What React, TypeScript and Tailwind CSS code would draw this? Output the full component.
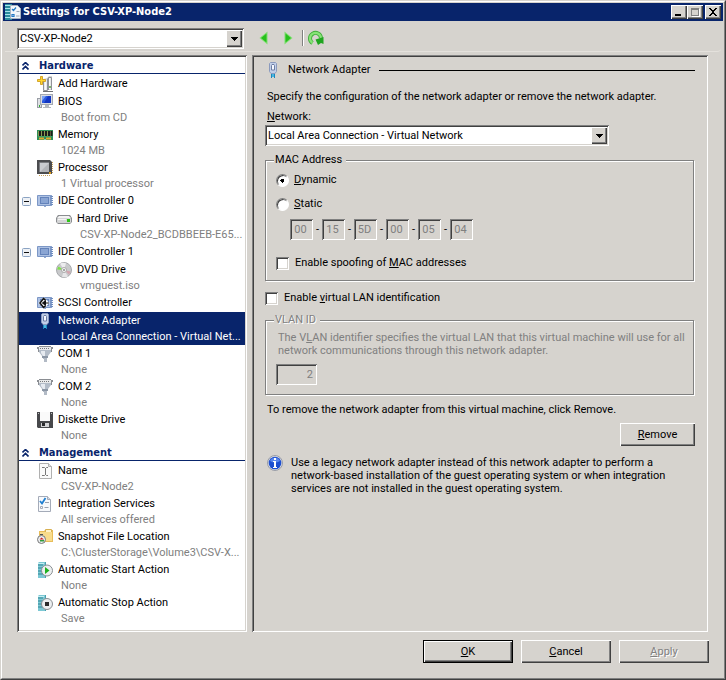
import type { ReactNode } from "react";

const sunken =
  "shadow-[inset_1px_1px_0_#808080,inset_-1px_-1px_0_#fff,inset_2px_2px_0_#404040,inset_-2px_-2px_0_#d6d3ce]";
const raised =
  "shadow-[inset_1px_1px_0_#fff,inset_-1px_-1px_0_#404040,inset_-2px_-2px_0_#808080]";

function Svg({ children, w = 16, h = 16 }: { children: ReactNode; w?: number; h?: number }) {
  return (
    <svg width={w} height={h} viewBox={`0 0 ${w} ${h}`} className="block shrink-0" aria-hidden="true">
      {children}
    </svg>
  );
}

function AppIcon() {
  return (
    <Svg>
      <rect x="0" y="0" width="7" height="16" fill="#2a8c9d" />
      <path d="M0 1.500h6M0 4.500h6M0 7.500h6M0 10.500h6M0 13.500h6" stroke="#a8e4ec" />
      <path d="M5.500 1.500h7l3 3v10h-10z" fill="#f3f6fb" stroke="#a9b3c1" />
      <path d="M7 5l1.500 1.500L11 3.500M7 10.500h2v2H7z" fill="none" stroke="#2377c4" strokeWidth="1.200" />
      <path d="M11.500 7.500h3M11 12h3.500" stroke="#98a4b4" />
    </Svg>
  );
}

function AddHardwareIcon() {
  return (
    <Svg>
      <path d="M6 3l4-1 2-2h3v14H6z" fill="#d6d8db" />
      <path d="M8.500 4v10M12.500 2v11" stroke="#fafafa" strokeWidth="2" />
      <path d="M6.500 6v8.500h4V2.500M11.500 14V1.500h3V14" fill="none" stroke="#909399" />
      <rect x="12" y="10" width="2" height="2" fill="#7db66d" />
      <path d="M6 15.500h10" stroke="#6e7074" />
      <path d="M3.500 .5h2v3h3v2h-3v3h-2v-3h-3v-2h3z" fill="#ffd52e" stroke="#c8930f" strokeWidth=".8" />
    </Svg>
  );
}

function BiosIcon() {
  return (
    <Svg>
      <rect x=".5" y="4.500" width="4" height="9" fill="#dfe1e5" stroke="#9a9ea6" />
      <rect x="2" y="11" width="1" height="2" fill="#2ea82e" />
      <rect x="3.500" y=".5" width="12" height="10" fill="#d9dce2" stroke="#a3a8b1" />
      <rect x="5" y="2" width="9" height="7" fill="#1236c4" />
      <path d="M5 2h6l-4 7H5z" fill="#2c5be0" />
      <path d="M5 2h4L5 7z" fill="#7aa2f6" />
      <path d="M8 11h4v2h2v1H6v-1h2z" fill="#b4b8be" />
    </Svg>
  );
}

function MemoryIcon() {
  return (
    <Svg>
      <path d="M0 3h16v10H9l-1-1-1 1H0z" fill="#2f8f57" />
      <rect x="1" y="4" width="14" height="5" fill="#8a9a50" />
      <path d="M3 4v5M6 4v5M9 4v5M12 4v5M14.500 4v5" stroke="#1c1c1c" strokeWidth="2" />
      <path d="M1 9.500h14" stroke="#3fa068" />
      <path d="M2 11.500h5M9 11.500h5" stroke="#e2a730" strokeWidth="2" />
    </Svg>
  );
}

function ProcessorIcon() {
  return (
    <Svg>
      <path d="M2 15.500h12M15.500 2v12" stroke="#c9a15a" strokeDasharray="1 1" />
      <path d="M0 0h13l2 2v12H0z" fill="#4b4c4f" />
      <path d="M3 3h9v9H3z" fill="#b2b4b8" />
      <path d="M3 3h9l-9 9z" fill="#c9cbcf" />
      <path d="M2.500 12V2.500H12" fill="none" stroke="#7a7c80" />
      <rect x="12" y="12" width="2" height="2" fill="#e0a020" />
    </Svg>
  );
}

function IdeChip() {
  return (
    <>
      <path d="M1 2h14v11H9v1H7v-1H1z" fill="#8ea8d2" />
      <path d="M.5 2.500h13v10H.5z" fill="#adc1e3" stroke="#7c97c6" />
      <path d="M15 3v10" stroke="#6f8cbe" strokeWidth="2" strokeDasharray="1 1" />
      <rect x="3.500" y="4.500" width="8" height="6" fill="#8aa5d3" stroke="#6483ba" />
    </>
  );
}

function IdeIcon() {
  return (
    <Svg>
      <IdeChip />
    </Svg>
  );
}

function ScsiIcon() {
  return (
    <Svg>
      <IdeChip />
      <path d="M7 2.500L12.500 8 7 13.500 1.500 8z" fill="#fff" />
      <path d="M8.500 5L6.500 3.500 3 8l3.500 4.500L8.500 11" fill="none" stroke="#111" strokeWidth="1.600" />
      <path d="M5.500 8H12M8.500 5.500v5L5.500 8z" fill="#111" stroke="#111" />
    </Svg>
  );
}

function HardDriveIcon() {
  return (
    <Svg>
      <path d="M2 4h12l2 3v4l-2 2H2l-2-2V7z" fill="#8b8d90" />
      <path d="M3 5h10l2 2H1z" fill="#f3f3f3" />
      <rect x="1" y="7" width="14" height="5" rx="1" fill="#d4d5d6" />
      <path d="M2 8.500h8" stroke="#f4f4f4" />
      <rect x="11" y="8" width="3" height="3" fill="#2fc417" />
    </Svg>
  );
}

function DvdIcon() {
  return (
    <Svg>
      <circle cx="8" cy="8" r="7.500" fill="#c8c9cb" stroke="#a7a9ac" />
      <path d="M8 8L4 1.500a7 7 0 0 1 6-.3z" fill="#ececee" />
      <path d="M8 8l4 6.500a7 7 0 0 1-6 .3z" fill="#e6e6e8" />
      <path d="M8 8L1.200 7.500a7 7 0 0 1 1.300-3z" fill="#7fe04a" />
      <path d="M8 8l5 4.500a6 6 0 0 0 1.500-3z" fill="#d3a4ae" />
      <circle cx="8" cy="8" r="2.500" fill="#f6f6f6" stroke="#aaa" />
      <circle cx="8" cy="8" r="1" fill="#8a8a8a" />
    </Svg>
  );
}

function NetworkIcon() {
  return (
    <Svg>
      <path d="M5.500 .5h5l1 1v8l-1.500 2H6l-1.500-2v-8z" fill="#c2cfe8" stroke="#8b9abd" />
      <path d="M7 2.500h2l.5 1v4.500h-3V3.500z" fill="#f6f9ff" stroke="#6d7da3" />
      <path d="M6 12h4v3H6z" fill="#49b6e0" />
      <path d="M6.500 12v4M9.500 12v4" stroke="#1b87bd" />
    </Svg>
  );
}

function ComIcon() {
  return (
    <Svg>
      <path d="M0 1h2V0h12v1h2v2h-1v3H1V3H0z" fill="#8a8d92" />
      <path d="M2 1h12v3H2z" fill="#e8e9ea" />
      <path d="M3 2.500h10" stroke="#75777b" strokeDasharray="1 1" />
      <path d="M2 4h12v2l-3 4H5L2 6z" fill="#b3bcc8" />
      <path d="M4 5h4v5H6L4 7z" fill="#e6eaf0" />
      <path d="M5 10h6v2H5z" fill="#8c97a6" />
      <path d="M6 12h4v1H6zM7 13h3v3H7z" fill="#b2bac5" />
    </Svg>
  );
}

function DisketteIcon() {
  return (
    <Svg>
      <path d="M0 0h16v16H1l-1-1z" fill="#47484b" />
      <path d="M3 0h10v9H3z" fill="#fafafa" />
      <path d="M1 1h1v1H1zM14 1h1v1h-1z" fill="#bbb" />
      <path d="M4 11h8v4H4z" fill="#d2d3d5" />
      <path d="M5 11h3v3H5z" fill="#2a2a2c" />
    </Svg>
  );
}

function NameIcon() {
  return (
    <Svg>
      <path d="M2.500 .5h9l3 3v12h-12z" fill="#fafafa" stroke="#b0b0b0" />
      <path d="M11.500 .5v3h3" fill="#ddd" stroke="#b0b0b0" />
      <path d="M5 4.500h2.500l1 1 1-1H11M8.500 5v7M5 12.500h2.500l1-1 1 1H11" fill="none" stroke="#777" />
    </Svg>
  );
}

function ServicesIcon() {
  return (
    <Svg>
      <path d="M1.500 .5h9l3 3v12h-12z" fill="#f7f9fc" stroke="#a4abb8" />
      <path d="M10.500 .5v3h3" fill="#d6dbe4" stroke="#a4abb8" />
      <path d="M3 5l2 2.500L8.500 2" fill="none" stroke="#1f7fd1" strokeWidth="1.800" />
      <path d="M3.500 10.500h2v2h-2z" fill="none" stroke="#a4abb8" />
      <path d="M8 6.500h4M7.500 11.500h4" stroke="#98a0ae" />
    </Svg>
  );
}

function SnapshotIcon() {
  return (
    <Svg>
      <path d="M2 2h5l1-1h8v12H4L2 11z" fill="#e8bd5a" />
      <path d="M8.500 .5h6v3h-6z" fill="#fff3c9" stroke="#d8b052" />
      <path d="M3 3h12v9H3z" fill="#f8dc8c" />
      <circle cx="4.500" cy="10.500" r="4" fill="#e9eef0" stroke="#777" />
      <path d="M3 5.500h3" stroke="#555" />
      <path d="M2.500 10.500l2-2 2.500 2z" fill="#d62020" />
      <path d="M3 11h4v1.500H3z" fill="#2f9e3c" />
    </Svg>
  );
}

function ServerBars() {
  return (
    <>
      <path d="M1 1l1-1h7v16H1z" fill="#7cc8d4" />
      <path d="M8 0h1v16H8z" fill="#4a9fae" />
      <path d="M1 3h5M1 6h5M1 9h5M1 12h5" stroke="#2f8494" />
      <path d="M1 1.500h6" stroke="#c6eef2" />
    </>
  );
}

function StartIcon() {
  return (
    <Svg>
      <ServerBars />
      <circle cx="10" cy="8.500" r="5.500" fill="#eceff0" stroke="#8a8f93" />
      <path d="M8 5l4.500 3.500L8 12z" fill="#1fb01f" />
    </Svg>
  );
}

function StopIcon() {
  return (
    <Svg>
      <ServerBars />
      <circle cx="10" cy="9" r="5.500" fill="#eceff0" stroke="#8a8f93" />
      <path d="M8 7h4v4H8z" fill="#2b2b2b" />
    </Svg>
  );
}

function InfoIcon() {
  return (
    <Svg>
      <circle cx="8" cy="8" r="7.500" fill="#d9dce4" stroke="#9a9da6" />
      <circle cx="8" cy="8" r="6.300" fill="#1d4fd0" />
      <path d="M3 6a5.500 5.500 0 0 1 10 0q-5 3-10 0z" fill="#5a87ec" />
      <path d="M7 3h2v2H7zM6 6h3v6h1v1H6v-1h1V7H6z" fill="#fff" />
    </Svg>
  );
}

function Expander() {
  return (
    <button type="button" aria-label="Collapse" className="block size-[9px]">
      <svg width="9" height="9" viewBox="0 0 9 9" className="block">
        <rect x=".5" y=".5" width="8" height="8" rx="1" fill="#eef1f5" stroke="#8ba3c3" />
        <path d="M2 4.500h5" stroke="#111" />
      </svg>
    </button>
  );
}

function DropArrow() {
  return (
    <span
      className={`pointer-events-none absolute inset-y-0.5 right-0.5 flex w-4 items-center justify-center bg-[#d6d3ce] ${raised}`}
    >
      <svg width="7" height="4" viewBox="0 0 7 4" className="block" shapeRendering="crispEdges">
        <path d="M0 0h7v1H6v1H5v1H4v1H3V3H2V2H1V1H0z" fill="#000" />
      </svg>
    </span>
  );
}

function Section({ title, children }: { title: string; children: ReactNode }) {
  return (
    <section>
      <h2 className="mb-px flex h-[17px] items-center gap-[10px] border-b border-[#08246b] pt-0.5 pl-[3px] font-['DejaVu_Sans_Condensed','DejaVu_Sans',sans-serif] font-bold text-[#08246b]">
        <svg width="7" height="8" viewBox="0 0 7 8" className="block" aria-hidden="true">
          <path d="M.5 3.500l3-3 3 3M.5 7.500l3-3 3 3" fill="none" stroke="#08246b" strokeWidth="1.600" />
        </svg>
        {title}
      </h2>
      <ul>{children}</ul>
    </section>
  );
}

type ItemProps = {
  icon: ReactNode;
  title: string;
  detail?: string;
  nested?: boolean;
  expandable?: boolean;
  selected?: boolean;
};

function Item({ icon, title, detail, nested, expandable, selected }: ItemProps) {
  return (
    <li className={`pl-[3px] ${selected ? "bg-[#08246b] text-white" : "text-black"}`}>
      <div className="flex h-[18px] items-center">
        <span className={nested ? "w-[34px]" : "w-[15px]"}>{expandable && <Expander />}</span>
        {icon}
        <span className="pl-[5px]">{title}</span>
      </div>
      {detail && (
        <div
          className={`h-[15px] truncate leading-[13px] ${nested ? "pl-[58px]" : "pl-[39px]"} ${selected ? "" : "text-[#808080]"}`}
        >
          {detail}
        </div>
      )}
    </li>
  );
}

function CaptionButton({ label, children }: { label: string; children: ReactNode }) {
  return (
    <button
      type="button"
      aria-label={label}
      className={`flex h-[14px] w-4 items-center justify-center bg-[#d6d3ce] ${raised}`}
    >
      <svg width="10" height="10" viewBox="0 0 10 10" className="block" shapeRendering="crispEdges">
        {children}
      </svg>
    </button>
  );
}

const radioClass =
  "size-[13px] shrink-0 appearance-none rounded-full border border-t-[#808080] border-l-[#808080] border-r-white border-b-white bg-white shadow-[inset_1px_1px_0_#404040] checked:bg-[radial-gradient(circle,#000_2px,#fff_2px)]";
const checkClass = `size-[13px] shrink-0 appearance-none bg-white ${sunken}`;
const fieldsetClass =
  "mr-px border border-[#808080] px-2 shadow-[1px_1px_0_#fff,inset_1px_1px_0_#fff]";

export default function App() {
  return (
    <div className="flex min-h-screen flex-col border border-t-[#d6d3ce] border-r-[#404040] border-b-[#404040] border-l-[#d6d3ce] bg-[#d6d3ce] font-['Roboto','Liberation_Sans',sans-serif] text-[11px] leading-[14px] text-black">
      <div className="flex flex-1 flex-col border border-t-white border-r-[#808080] border-b-[#808080] border-l-white pt-px">
        <header className="mx-px flex h-[18px] items-center bg-[#08246b] pr-0.5 pl-0.5">
          <AppIcon />
          <h1 className="flex-1 pl-0.5 font-['DejaVu_Sans_Condensed','DejaVu_Sans',sans-serif] font-bold text-white">
            Settings for CSV-XP-Node2
          </h1>
          <CaptionButton label="Minimize">
            <path d="M1 7h6v2H1z" fill="#000" />
          </CaptionButton>
          <CaptionButton label="Maximize">
            <path d="M1 1h8v8H1zM2 3v5h6V3z" fill="#808080" fillRule="evenodd" />
            <path d="M9 2h1v8H2V9h7z" fill="#fff" />
          </CaptionButton>
          <span className="w-0.5" />
          <CaptionButton label="Close">
            <path
              d="M1 1h2v1h1v1h2V2h1V1h2v1H8v1H7v1H6v2h1v1h1v1h1v1H7V8H6V7H4v1H3v1H1V8h1V7h1V6h1V4H3V3H2V2H1z"
              fill="#000"
            />
          </CaptionButton>
        </header>

        <nav className="mx-[3px] flex h-[31px] items-center rounded-br border-b border-[#e4e1dc] pl-3">
          <div className="relative mt-[5px] h-[21px] w-[227px]">
            <select
              aria-label="Virtual machine"
              className={`size-full appearance-none bg-white pl-[3px] ${sunken}`}
            >
              <option>CSV-XP-Node2</option>
            </select>
            <DropArrow />
          </div>
          <div className="flex items-center pt-1 pl-[15px]">
            <button type="button" aria-label="Back">
              <svg width="9" height="14" viewBox="0 0 9 14" className="block">
                <path d="M8.500 .5v13L.5 7z" fill="#7fe070" />
                <path d="M7.500 2.500v9L2 7z" fill="#27c01c" />
              </svg>
            </button>
            <button type="button" aria-label="Forward" className="ml-4">
              <svg width="9" height="14" viewBox="0 0 9 14" className="block">
                <path d="M.5 .5v13L8.500 7z" fill="#7fe070" />
                <path d="M1.500 2.500v9L7 7z" fill="#27c01c" />
              </svg>
            </button>
            <span className="ml-[9px] h-4 w-0.5 border-r border-l border-l-[#808080] border-r-white" />
            <button type="button" aria-label="Refresh" className="ml-1">
              <Svg>
                <path d="M4.500 13A5.500 5.500 0 1 1 13 8" fill="none" stroke="#3fae3a" strokeWidth="4" />
                <path d="M4.500 13A5.500 5.500 0 1 1 13 8" fill="none" stroke="#86e376" strokeWidth="2.200" />
                <path d="M7.500 9.500L15.500 7v7l-2.500-1-3 2z" fill="#1fa51f" />
              </Svg>
            </button>
          </div>
        </nav>

        <main className="flex flex-1 gap-[5px] pt-[3px] pr-4 pl-[15px]">
          <aside className={`w-[230px] shrink-0 bg-white p-0.5 ${sunken}`}>
            <Section title="Hardware">
              <Item icon={<AddHardwareIcon />} title="Add Hardware" />
              <Item icon={<BiosIcon />} title="BIOS" detail="Boot from CD" />
              <Item icon={<MemoryIcon />} title="Memory" detail="1024 MB" />
              <Item icon={<ProcessorIcon />} title="Processor" detail="1 Virtual processor" />
              <Item icon={<IdeIcon />} title="IDE Controller 0" expandable />
              <Item icon={<HardDriveIcon />} title="Hard Drive" detail="CSV-XP-Node2_BCDBBEEB-E65..." nested />
              <Item icon={<IdeIcon />} title="IDE Controller 1" expandable />
              <Item icon={<DvdIcon />} title="DVD Drive" detail="vmguest.iso" nested />
              <Item icon={<ScsiIcon />} title="SCSI Controller" />
              <Item
                icon={<NetworkIcon />}
                title="Network Adapter"
                detail="Local Area Connection - Virtual Net..."
                selected
              />
              <Item icon={<ComIcon />} title="COM 1" detail="None" />
              <Item icon={<ComIcon />} title="COM 2" detail="None" />
              <Item icon={<DisketteIcon />} title="Diskette Drive" detail="None" />
            </Section>
            <Section title="Management">
              <Item icon={<NameIcon />} title="Name" detail="CSV-XP-Node2" />
              <Item icon={<ServicesIcon />} title="Integration Services" detail="All services offered" />
              <Item icon={<SnapshotIcon />} title="Snapshot File Location" detail="C:\ClusterStorage\Volume3\CSV-X..." />
              <Item icon={<StartIcon />} title="Automatic Start Action" detail="None" />
              <Item icon={<StopIcon />} title="Automatic Stop Action" detail="Save" />
            </Section>
          </aside>

          <section className={`min-w-0 flex-1 pt-[7px] pr-[13px] pl-[13px] ${sunken}`}>
            <div className="flex h-4 items-center">
              <NetworkIcon />
              <h2 className="pr-2 pl-[7px]">Network Adapter</h2>
              <span className="h-px flex-1 bg-black" />
            </div>
            <p className="mt-3 pl-0.5">
              Specify the configuration of the network adapter or remove the network adapter.
            </p>
            <label htmlFor="network" className="mt-1.5 block pl-0.5">
              <u>N</u>etwork:
            </label>
            <div className="relative mt-px h-[21px] w-[344px]">
              <select id="network" className={`size-full appearance-none bg-white pl-[3px] ${sunken}`}>
                <option>Local Area Connection - Virtual Network</option>
              </select>
              <DropArrow />
            </div>

            <fieldset className={`mt-[7px] pb-[10px] ${fieldsetClass}`}>
              <legend className="bg-[#d6d3ce] pr-1 pl-px">MAC Address</legend>
              <div className="pt-1.5 pl-0.5">
                <label className="flex items-center gap-[5px]">
                  <input type="radio" name="mac" defaultChecked className={radioClass} />
                  <span>
                    <u>D</u>ynamic
                  </span>
                </label>
                <label className="mt-[10px] flex items-center gap-[5px]">
                  <input type="radio" name="mac" className={radioClass} />
                  <span>
                    <u>S</u>tatic
                  </span>
                </label>
                <div className="mt-2 flex items-center pl-[14px]">
                  {["00", "15", "5D", "00", "05", "04"].map((octet, i) => (
                    <div key={i} className="flex items-center">
                      {i > 0 && <span className="w-[9px] text-center">-</span>}
                      <input
                        aria-label={`MAC address byte ${i + 1}`}
                        defaultValue={octet}
                        disabled
                        className={`h-[21px] w-[23px] bg-transparent pr-0.5 text-center text-[#808080] ${sunken}`}
                      />
                    </div>
                  ))}
                </div>
                <label className="mt-4 flex items-center gap-1.5">
                  <input type="checkbox" className={checkClass} />
                  <span>
                    Enable spoofing of <u>M</u>AC addresses
                  </span>
                </label>
              </div>
            </fieldset>

            <label className="mt-[10px] flex items-center gap-1.5">
              <input type="checkbox" className={checkClass} />
              <span>
                Enable <u>v</u>irtual LAN identification
              </span>
            </label>

            <fieldset disabled className={`mt-2 pb-[9px] text-[#808080] ${fieldsetClass}`}>
              <legend className="bg-[#d6d3ce] pr-1 pl-px [text-shadow:1px_1px_0_#fff]">VLAN ID</legend>
              <div className="pt-1 pl-0.5">
                <label htmlFor="vlan" className="block pl-0.5 leading-[13px]">
                  The V<u>L</u>AN identifier specifies the virtual LAN that this virtual machine will use for all
                  <br />
                  network communications through this network adapter.
                </label>
                <input
                  id="vlan"
                  defaultValue="2"
                  className={`mt-[7px] block h-[21px] w-[41px] bg-transparent pr-1 text-right ${sunken}`}
                />
              </div>
            </fieldset>

            <p className="mt-2 pl-0.5">To remove the network adapter from this virtual machine, click Remove.</p>
            <div className="mt-1.5 flex justify-end">
              <button type="button" className={`h-[23px] w-[75px] ${raised}`}>
                <u>R</u>emove
              </button>
            </div>
            <div className="mt-[9px] flex gap-2 pl-0.5">
              <InfoIcon />
              <p className="pt-px leading-[13px]">
                Use a legacy network adapter instead of this network adapter to perform a
                <br />
                network-based installation of the guest operating system or when integration
                <br />
                services are not installed in the guest operating system.
              </p>
            </div>
          </section>
        </main>

        <footer className="flex justify-end gap-2 pt-2 pr-[15px] pb-[15px]">
          <button
            type="button"
            className="h-[23px] w-[90px] border border-black shadow-[inset_1px_1px_0_#fff,inset_-1px_-1px_0_#404040,inset_-2px_-2px_0_#808080]"
          >
            <u>O</u>K
          </button>
          <button type="button" className={`h-[23px] w-[90px] ${raised}`}>
            <u>C</u>ancel
          </button>
          <button
            type="button"
            disabled
            className={`h-[23px] w-[90px] text-[#808080] [text-shadow:1px_1px_0_#fff] ${raised}`}
          >
            <u>A</u>pply
          </button>
        </footer>
      </div>
    </div>
  );
}
